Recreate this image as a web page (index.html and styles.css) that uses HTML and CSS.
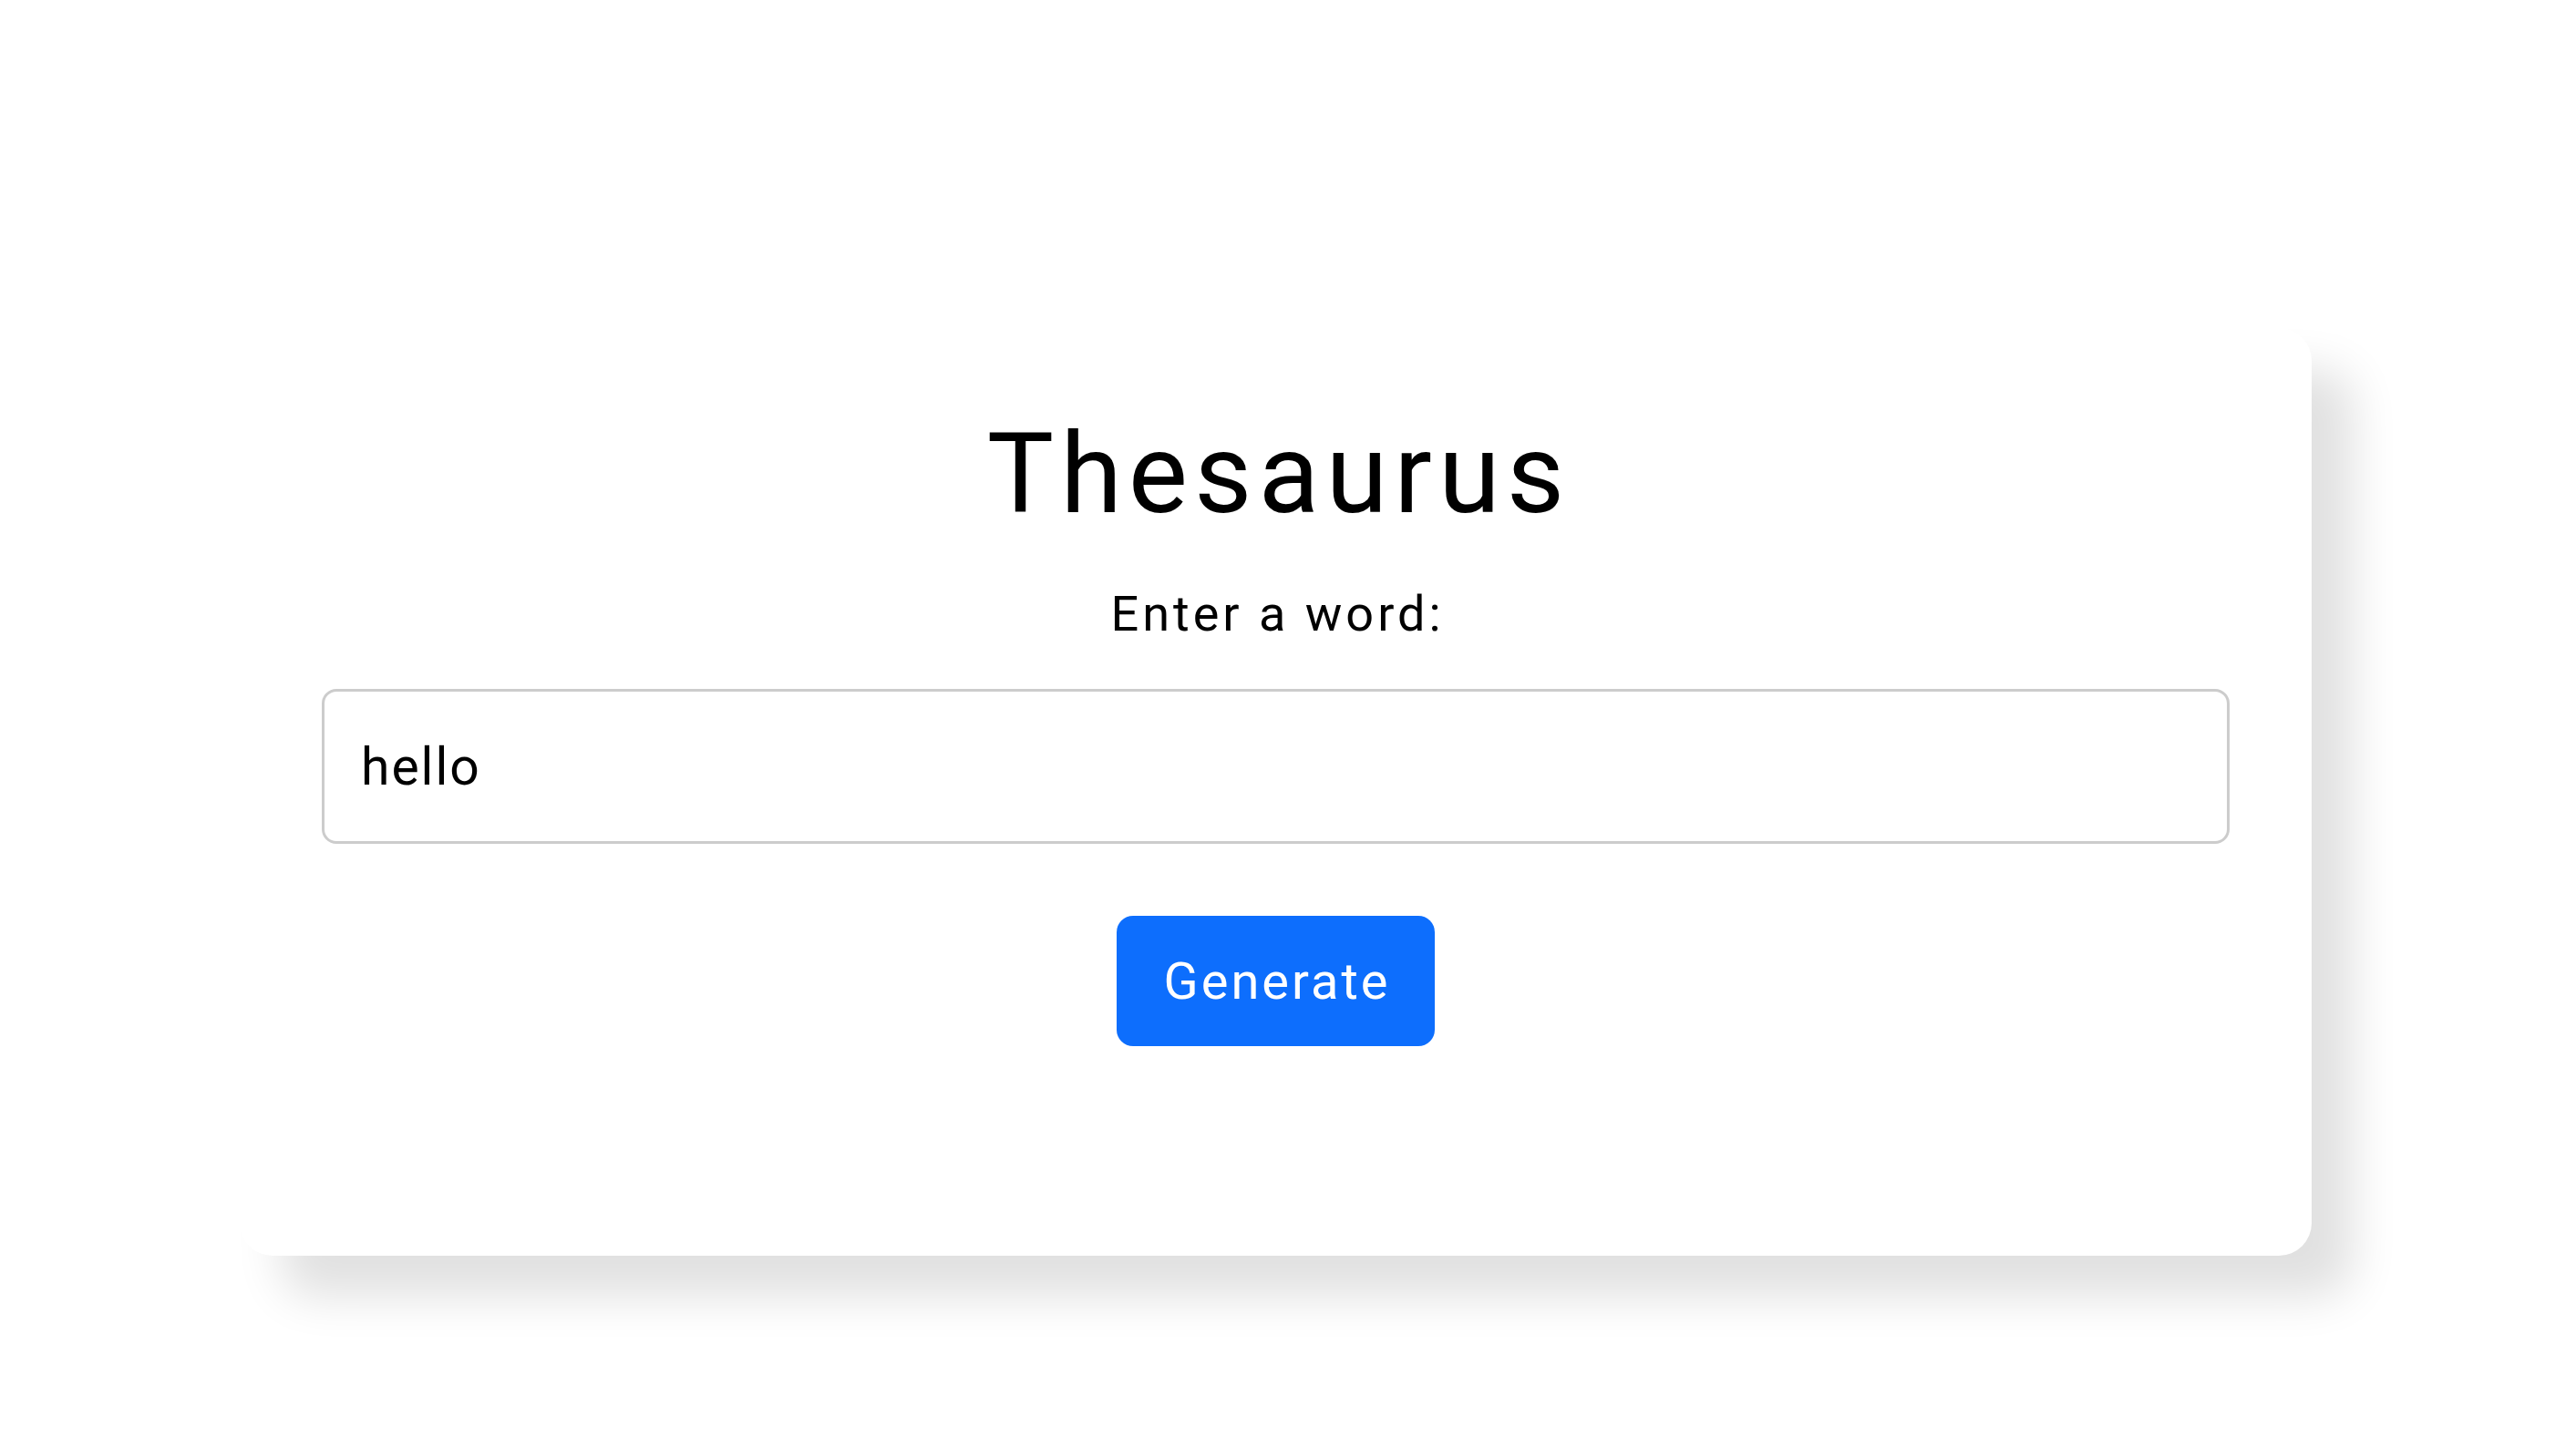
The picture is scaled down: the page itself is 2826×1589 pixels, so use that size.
FILE: index.html
```html
<!DOCTYPE html>
<html lang="en">
<head>
<meta charset="utf-8">
<title>Thesaurus</title>
<link rel="stylesheet" href="styles.css">
</head>
<body>
<main class="page">
  <section class="card">
    <h1 class="title">Thesaurus</h1>
    <label class="label" for="word">Enter a word:</label>
    <input class="word-input" id="word" type="text" value="hello">
    <button class="btn" type="button">Generate</button>
  </section>
</main>
</body>
</html>
```

FILE: styles.css
```css
html, body {
  margin: 0;
  padding: 0;
  background: #ffffff;
}

.page {
  padding: 360px 0 0 263px;
  min-height: 1589px;
  box-sizing: border-box;
  display: flex;
  align-items: flex-start;
}

.card {
  width: 2273px;
  box-sizing: border-box;
  padding: 87px 90px 230px 90px;
  background: #ffffff;
  border-radius: 36px;
  box-shadow: 45px 45px 50px rgba(0, 0, 0, 0.12);
  display: flex;
  flex-direction: column;
  align-items: center;
}

.title {
  margin: 0;
  padding-left: 7px;
  font-family: "Roboto", "Liberation Sans", sans-serif;
  font-weight: 400;
  font-size: 123px;
  line-height: 1.2;
  letter-spacing: 7px;
  color: #000;
}

.label {
  margin-top: 47px;
  padding-left: 4px;
  font-family: "Roboto", "Liberation Sans", sans-serif;
  font-size: 54px;
  line-height: 1.2;
  letter-spacing: 4px;
  color: #000;
}

.word-input {
  margin-top: 50px;
  width: 100%;
  height: 170px;
  box-sizing: border-box;
  border: 3px solid #cccccc;
  border-radius: 16px;
  padding: 0 40px;
  font-family: "Roboto", "Liberation Sans", sans-serif;
  font-size: 57px;
  letter-spacing: 2px;
  color: #000;
  background: #fff;
  outline: none;
}

.btn {
  margin-top: 79px;
  width: 349px;
  height: 143px;
  border: none;
  border-radius: 18px;
  background: #0d6efd;
  color: #ffffff;
  font-family: "Roboto", "Liberation Sans", sans-serif;
  font-size: 56px;
  letter-spacing: 3px;
  padding: 0 0 0 3px;
  cursor: pointer;
}
```
